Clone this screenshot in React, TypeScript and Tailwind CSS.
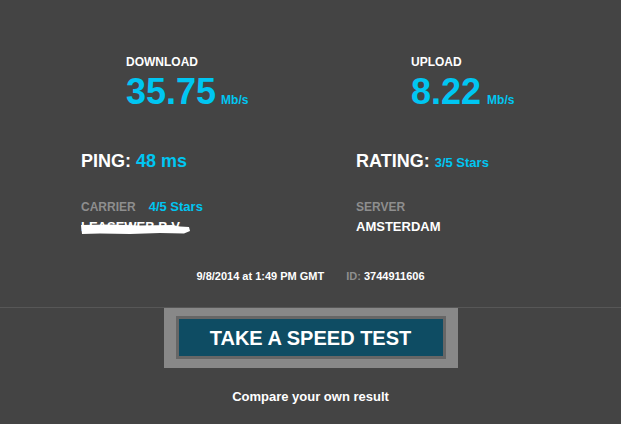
import React from "react";

const cyan = "text-[#00c6f2]";

export default function App(): React.ReactElement {
  return (
    <main
      className="relative h-[424px] w-[621px] overflow-hidden bg-[#444444] font-bold text-white"
      style={{ fontFamily: '"Liberation Sans", Arial, sans-serif' }}
    >
      {/* speeds */}
      <div className="grid grid-cols-[275px_1fr] pl-[81px] pt-[55px]">
        <div className="pl-[45px]">
          <div className="text-[12px] leading-[14px]">DOWNLOAD</div>
          <div className={`mt-[5px] flex items-baseline ${cyan}`}>
            <span className="text-[36px] leading-[36px]">35.75</span>
            <span className="ml-[5px] text-[12px]">Mb/s</span>
          </div>
        </div>
        <div className="pl-[55px]">
          <div className="text-[12px] leading-[14px]">UPLOAD</div>
          <div className={`mt-[5px] flex items-baseline ${cyan}`}>
            <span className="text-[36px] leading-[36px]">8.22</span>
            <span className="ml-[6px] text-[12px]">Mb/s</span>
          </div>
        </div>
      </div>

      {/* ping / rating */}
      <div className="mt-[41px] grid grid-cols-[275px_1fr] pl-[81px]">
        <div className="flex items-baseline text-[18px] leading-[20px]">
          <span>PING:</span>
          <span className={`ml-[5px] ${cyan}`}>48 ms</span>
        </div>
        <div className="flex items-baseline text-[18px] leading-[20px]">
          <span>RATING:</span>
          <span className={`ml-[5px] text-[13px] ${cyan}`}>3/5 Stars</span>
        </div>
      </div>

      {/* carrier / server */}
      <div className="mt-[27px] grid grid-cols-[275px_1fr] pl-[81px] text-[12px] leading-[14px]">
        <div>
          <div className="flex items-baseline">
            <span className="text-[#8e8e8e]">CARRIER</span>
            <span className={`ml-[13px] text-[13px] ${cyan}`}>4/5 Stars</span>
          </div>
          <div className="relative mt-[6px] h-[14px] w-[112px]">
            <span className="absolute left-0 top-0 text-[13px] leading-[14px]">
              LEASEWEB B.V.
            </span>
            <svg
              className="absolute left-[-1px] top-[3px]"
              width="112"
              height="12"
              viewBox="0 0 112 12"
            >
              <path
                d="M1 2 L30 1.5 L60 2.5 L92 2 L100 3.5 L109 4 L110 8 L104 10.5 L80 10 L50 11 L20 10.5 L2 11 Z"
                fill="#ffffff"
              />
            </svg>
          </div>
        </div>
        <div>
          <div className="text-[#8e8e8e]">SERVER</div>
          <div className="mt-[6px] text-[13px]">AMSTERDAM</div>
        </div>
      </div>

      {/* date / id */}
      <div className="mt-[36px] flex justify-center gap-[22px] text-[11px] leading-[13px]">
        <span>9/8/2014 at 1:49 PM GMT</span>
        <span>
          <span className="text-[#8e8e8e]">ID:</span> 3744911606
        </span>
      </div>

      {/* divider + button */}
      <div className="mt-[24px] border-t border-[#575757]">
        <div className="flex justify-center">
          <div className="bg-[#888888] px-[12px] pb-[9px] pt-[8px]">
            <button
              type="button"
              className="flex h-[43px] w-[270px] items-center justify-center border-[3px] border-[#666666] bg-[#0e4c63] text-[20px] text-white"
            >
              TAKE A SPEED TEST
            </button>
          </div>
        </div>
        <div className="mt-[21px] text-center text-[13px] leading-[15px]">
          Compare your own result
        </div>
      </div>
    </main>
  );
}
